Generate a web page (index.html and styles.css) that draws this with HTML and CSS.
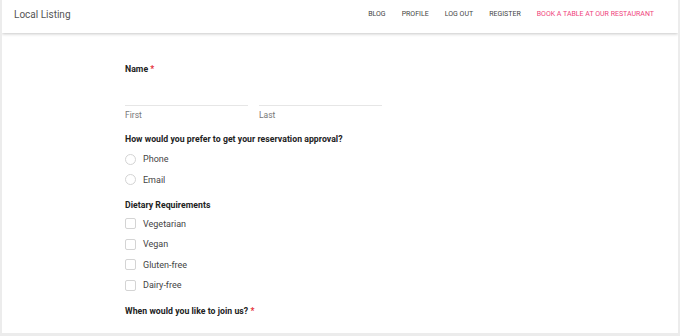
FILE: index.html
```html
<!DOCTYPE html>
<html lang="en">
<head>
<meta charset="utf-8">
<title>Local Listing</title>
<link rel="stylesheet" href="styles.css">
</head>
<body>
<div class="page">
  <header class="topbar">
    <div class="logo">Local Listing</div>
    <nav class="nav">
      <a class="nav-link">BLOG</a>
      <a class="nav-link">PROFILE</a>
      <a class="nav-link">LOG OUT</a>
      <a class="nav-link">REGISTER</a>
      <a class="nav-link nav-accent">BOOK A TABLE AT OUR RESTAURANT</a>
    </nav>
  </header>
  <main class="form">
    <div class="q q-name">Name <span class="req">*</span></div>
    <div class="name-row">
      <div class="name-field"><div class="line-input"></div><div class="sub">First</div></div>
      <div class="name-field"><div class="line-input"></div><div class="sub">Last</div></div>
    </div>
    <div class="q q-approval">How would you prefer to get your reservation approval?</div>
    <div class="options options-radio">
      <div class="opt"><span class="radio"></span>Phone</div>
      <div class="opt"><span class="radio"></span>Email</div>
    </div>
    <div class="q q-diet">Dietary Requirements</div>
    <div class="options options-check">
      <div class="opt"><span class="check"></span>Vegetarian</div>
      <div class="opt"><span class="check"></span>Vegan</div>
      <div class="opt"><span class="check"></span>Gluten-free</div>
      <div class="opt"><span class="check"></span>Dairy-free</div>
    </div>
    <div class="q q-join">When would you like to join us? <span class="req">*</span></div>
  </main>
</div>
</body>
</html>
```
FILE: styles.css
```css
html, body {
  margin: 0;
  padding: 0;
}
body {
  background: #ececec;
  font-family: Roboto, "Liberation Sans", Arial, sans-serif;
  width: 680px;
  height: 336px;
  overflow: hidden;
}
.page {
  margin: 0 2px 0 2px;
  height: 333px;
  background: #ffffff;
  overflow: hidden;
}
.topbar {
  height: 33px;
  display: flex;
  align-items: center;
  justify-content: space-between;
  padding: 0 24px 0 12px;
  box-shadow: 0 1px 3px rgba(0,0,0,0.22);
  position: relative;
}
.logo {
  font-size: 10px;
  color: #555;
  margin-top: -5px;
}
.nav {
  display: flex;
  gap: 16px;
  margin-top: -5px;
}
.nav-link {
  font-size: 7px;
  color: #444;
}
.nav-accent {
  color: #ef3f7d;
}
.form {
  padding: 30px 0 0 123px;
}
.q {
  font-size: 8.7px;
  letter-spacing: 0.04px;
  font-weight: bold;
  color: #222;
  line-height: 12px;
}
.req {
  color: #e5323b;
}
.name-row {
  display: flex;
  gap: 11px;
}
.name-field {
  width: 123px;
}
.line-input {
  height: 30px;
  border-bottom: 1px solid #e6e6e6;
}
.sub {
  font-size: 8.5px;
  color: #777;
  line-height: 12px;
  margin-top: 3px;
}
.q-approval {
  margin-top: 12px;
}
.options-radio {
  margin-top: 4px;
}
.q-diet {
  margin-top: 9px;
}
.options-check {
  margin-top: 3px;
}
.q-join {
  margin-top: 10px;
}
.opt {
  height: 20.4px;
  display: flex;
  align-items: center;
  font-size: 9px;
  color: #444;
}
.radio {
  width: 9px;
  height: 9px;
  border: 1px solid #d4d4d4;
  border-radius: 50%;
  margin-right: 7px;
}
.check {
  width: 9px;
  height: 9px;
  border: 1px solid #d4d4d4;
  border-radius: 2px;
  margin-right: 7px;
}
```
